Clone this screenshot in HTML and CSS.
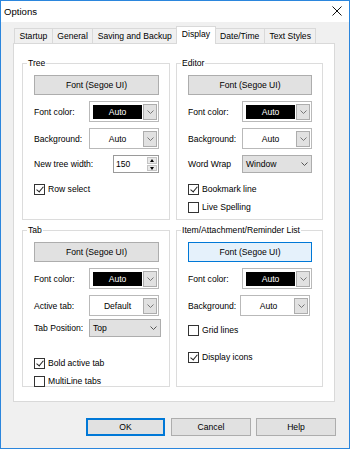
FILE: index.html
```html
<!DOCTYPE html>
<html lang="en">
<head>
    <meta charset="UTF-8">
    <title>Options</title>
    <link rel="stylesheet" href="styles.css">
</head>
<body>
    <div class="window">
        <div class="titlebar">
            <span class="title">Options</span>
            <svg class="close" width="10" height="10" viewBox="0 0 10 10">
                <path d="M0.5 0.5 L9.5 9.5 M9.5 0.5 L0.5 9.5" stroke="#111" stroke-width="1"/>
            </svg>
        </div>

        <div class="client">
            <div class="tabs">
                <div class="tab">Startup</div>
                <div class="tab">General</div>
                <div class="tab">Saving and Backup</div>
                <div class="tab active">Display</div>
                <div class="tab">Date/Time</div>
                <div class="tab">Text Styles</div>
            </div>

            <div class="panel">
                <!-- Tree -->
                <fieldset class="group">
                    <legend>Tree</legend>
                    <div class="group-body">
                        <button class="font-btn">Font (Segoe UI)</button>
                        <div class="row">
                            <span>Font color:</span>
                            <div class="color-combo">
                                <span class="swatch dark">Auto</span>
                                <span class="drop-btn"><svg width="7" height="4" viewBox="0 0 7 4"><path d="M0.5 0.5 L3.5 3.5 L6.5 0.5" fill="none" stroke="#777"/></svg></span>
                            </div>
                        </div>
                        <div class="row">
                            <span>Background:</span>
                            <div class="color-combo">
                                <span class="swatch">Auto</span>
                                <span class="drop-btn"><svg width="7" height="4" viewBox="0 0 7 4"><path d="M0.5 0.5 L3.5 3.5 L6.5 0.5" fill="none" stroke="#777"/></svg></span>
                            </div>
                        </div>
                        <div class="row small">
                            <span>New tree width:</span>
                            <div class="spin">
                                <span class="spin-value">150</span>
                                <span class="spin-btns">
                                    <span class="spin-up"></span>
                                    <span class="spin-down"></span>
                                </span>
                            </div>
                        </div>
                        <label class="check first"><span class="box checked"></span>Row select</label>
                    </div>
                </fieldset>

                <!-- Editor -->
                <fieldset class="group">
                    <legend>Editor</legend>
                    <div class="group-body">
                        <button class="font-btn">Font (Segoe UI)</button>
                        <div class="row">
                            <span>Font color:</span>
                            <div class="color-combo">
                                <span class="swatch dark">Auto</span>
                                <span class="drop-btn"><svg width="7" height="4" viewBox="0 0 7 4"><path d="M0.5 0.5 L3.5 3.5 L6.5 0.5" fill="none" stroke="#777"/></svg></span>
                            </div>
                        </div>
                        <div class="row">
                            <span>Background:</span>
                            <div class="color-combo">
                                <span class="swatch">Auto</span>
                                <span class="drop-btn"><svg width="7" height="4" viewBox="0 0 7 4"><path d="M0.5 0.5 L3.5 3.5 L6.5 0.5" fill="none" stroke="#777"/></svg></span>
                            </div>
                        </div>
                        <div class="row small">
                            <span>Word Wrap</span>
                            <div class="select">
                                <span>Window</span>
                                <svg width="7" height="4" viewBox="0 0 7 4"><path d="M0.5 0.5 L3.5 3.5 L6.5 0.5" fill="none" stroke="#555"/></svg>
                            </div>
                        </div>
                        <label class="check first"><span class="box checked"></span>Bookmark line</label>
                        <label class="check"><span class="box"></span>Live Spelling</label>
                    </div>
                </fieldset>

                <!-- Tab -->
                <fieldset class="group">
                    <legend>Tab</legend>
                    <div class="group-body">
                        <button class="font-btn">Font (Segoe UI)</button>
                        <div class="row">
                            <span>Font color:</span>
                            <div class="color-combo">
                                <span class="swatch dark">Auto</span>
                                <span class="drop-btn"><svg width="7" height="4" viewBox="0 0 7 4"><path d="M0.5 0.5 L3.5 3.5 L6.5 0.5" fill="none" stroke="#777"/></svg></span>
                            </div>
                        </div>
                        <div class="row">
                            <span>Active tab:</span>
                            <div class="color-combo">
                                <span class="swatch">Default</span>
                                <span class="drop-btn"><svg width="7" height="4" viewBox="0 0 7 4"><path d="M0.5 0.5 L3.5 3.5 L6.5 0.5" fill="none" stroke="#777"/></svg></span>
                            </div>
                        </div>
                        <div class="row small tight">
                            <span>Tab Position:</span>
                            <div class="select wide">
                                <span>Top</span>
                                <svg width="7" height="4" viewBox="0 0 7 4"><path d="M0.5 0.5 L3.5 3.5 L6.5 0.5" fill="none" stroke="#555"/></svg>
                            </div>
                        </div>
                        <label class="check gap-lg"><span class="box checked"></span>Bold active tab</label>
                        <label class="check"><span class="box"></span>MultiLine tabs</label>
                    </div>
                </fieldset>

                <!-- Item list -->
                <fieldset class="group">
                    <legend>Item/Attachment/Reminder List</legend>
                    <div class="group-body">
                        <button class="font-btn focused">Font (Segoe UI)</button>
                        <div class="row">
                            <span>Font color:</span>
                            <div class="color-combo">
                                <span class="swatch dark">Auto</span>
                                <span class="drop-btn"><svg width="7" height="4" viewBox="0 0 7 4"><path d="M0.5 0.5 L3.5 3.5 L6.5 0.5" fill="none" stroke="#777"/></svg></span>
                            </div>
                        </div>
                        <div class="row">
                            <span>Background:</span>
                            <div class="color-combo shifted">
                                <span class="swatch">Auto</span>
                                <span class="drop-btn"><svg width="7" height="4" viewBox="0 0 7 4"><path d="M0.5 0.5 L3.5 3.5 L6.5 0.5" fill="none" stroke="#777"/></svg></span>
                            </div>
                        </div>
                        <label class="check after-combo"><span class="box"></span>Grid lines</label>
                        <label class="check gap-md"><span class="box checked"></span>Display icons</label>
                    </div>
                </fieldset>
            </div>

            <div class="buttons">
                <button class="dlg-btn default">OK</button>
                <button class="dlg-btn">Cancel</button>
                <button class="dlg-btn">Help</button>
            </div>
        </div>
    </div>
</body>
</html>
```

FILE: styles.css
```css
* {
    margin: 0;
    padding: 0;
    box-sizing: border-box;
}

body {
    font-family: 'Liberation Sans', Arial, sans-serif;
    font-size: 8.6px;
    color: #000;
    background: #f0f0f0;
}

.window {
    width: 350px;
    height: 449px;
    border: 1px solid #2b86dd;
    display: flex;
    flex-direction: column;
}

.titlebar {
    height: 21px;
    background: #fff;
    display: flex;
    align-items: center;
    justify-content: space-between;
    padding: 0 7px 1px 3px;
}

.title {
    font-size: 9.6px;
}

.close {
    display: block;
}

.client {
    flex: 1;
    background: #f0f0f0;
    display: flex;
    flex-direction: column;
}

/* tab strip */
.tabs {
    display: flex;
    align-items: flex-end;
    height: 17px;
    margin: 4px 0 0 12px;
    padding-left: 1px;
}

.tab {
    height: 15px;
    line-height: 14px;
    padding: 0 4.5px;
    border: 1px solid #d9d9d9;
    border-bottom: none;
    margin-right: -1px;
    background: #f0f0f0;
    white-space: nowrap;
}

.tab.active {
    height: 18px;
    line-height: 15px;
    margin-bottom: -1px;
    background: #fff;
    position: relative;
    z-index: 1;
}

.panel {
    width: 322px;
    height: 359px;
    margin-left: 12px;
    background: #fff;
    border: 1px solid #d9d9d9;
    display: grid;
    grid-template-columns: 148px 147px;
    grid-template-rows: 162px 162px;
    column-gap: 6px;
    row-gap: 5px;
    padding: 14px 0 0 8px;
}

/* group boxes */
.group {
    display: block;
    min-width: 0;
    border: 1px solid #dcdcdc;
    padding: 6px 10px 0 11px;
}

.group legend {
    margin-left: -7px;
    padding: 0 1px;
    line-height: 11px;
}

.group-body {
    display: flex;
    flex-direction: column;
    gap: 6px;
}

.font-btn {
    height: 20px;
    flex-shrink: 0;
    font: inherit;
    color: #000;
    background: #e1e1e1;
    border: 1px solid #adadad;
}

.font-btn.focused {
    background: #e5f1fb;
    border-color: #0078d7;
}

.row {
    height: 21px;
    flex-shrink: 0;
    display: flex;
    align-items: center;
    justify-content: space-between;
}

.row.small {
    height: 18px;
}

.row.tight {
    margin-top: -3px;
}

/* colour picker combo */
.color-combo {
    width: 70px;
    height: 21px;
    border: 1px solid #b9b9b9;
    background: #fff;
    display: flex;
    align-items: center;
    gap: 1px;
    padding: 0 1px 0 3px;
}

.color-combo.shifted {
    margin-right: 2px;
}

.swatch {
    flex: 1;
    height: 14px;
    line-height: 14px;
    text-align: center;
    background: #fff;
}

.swatch.dark {
    background: #000;
    color: #fff;
}

.drop-btn {
    width: 14px;
    height: 16px;
    background: #e1e1e1;
    border: 1px solid #adadad;
    display: flex;
    align-items: center;
    justify-content: center;
}

.drop-btn svg,
.select svg {
    display: block;
}

/* drop-down list */
.select {
    width: 70px;
    height: 18px;
    background: #e1e1e1;
    border: 1px solid #adadad;
    display: flex;
    align-items: center;
    justify-content: space-between;
    padding: 0 3px 0 3px;
}

.select.wide {
    width: 72px;
    margin-right: -2px;
}

/* spin edit */
.spin {
    width: 46px;
    height: 18px;
    border: 1px solid #9a9a9a;
    background: #fff;
    display: flex;
    align-items: center;
    justify-content: space-between;
    padding: 0 1px 0 2px;
}

.spin-btns {
    width: 10px;
    height: 14px;
    display: flex;
    flex-direction: column;
    gap: 1px;
}

.spin-btns span {
    flex: 1;
    background: #e8e8e8;
    border: 1px solid #c4c4c4;
    position: relative;
}

.spin-up::after,
.spin-down::after {
    content: '';
    position: absolute;
    left: 2px;
    border-left: 2px solid transparent;
    border-right: 2px solid transparent;
}

.spin-up::after {
    top: 1px;
    border-bottom: 3px solid #000;
}

.spin-down::after {
    top: 1px;
    border-top: 3px solid #000;
}

/* check boxes */
.check {
    height: 12px;
    flex-shrink: 0;
    display: flex;
    align-items: center;
    gap: 3px;
}

.check.first {
    margin-top: 4px;
}

.check.gap-lg {
    margin-top: 14px;
}

.check.after-combo {
    margin-top: 2px;
}

.check.gap-md {
    margin-top: 9px;
}

.box {
    width: 11px;
    height: 11px;
    border: 1px solid #333;
    background: #fff;
    position: relative;
}

.box.checked::after {
    content: '';
    position: absolute;
    left: 3px;
    top: 0px;
    width: 3px;
    height: 6px;
    border-right: 1px solid #222;
    border-bottom: 1px solid #222;
    transform: rotate(40deg);
}

/* dialog buttons */
.buttons {
    display: flex;
    justify-content: flex-end;
    gap: 5px;
    margin-top: 16px;
    padding-right: 13px;
}

.dlg-btn {
    width: 80px;
    height: 18px;
    font: inherit;
    color: #000;
    background: #e1e1e1;
    border: 1px solid #adadad;
}

.dlg-btn.default {
    width: 79px;
    margin-right: 1px;
    border: 1px solid #0078d7;
    box-shadow: inset 0 0 0 1px #0078d7;
}
```
